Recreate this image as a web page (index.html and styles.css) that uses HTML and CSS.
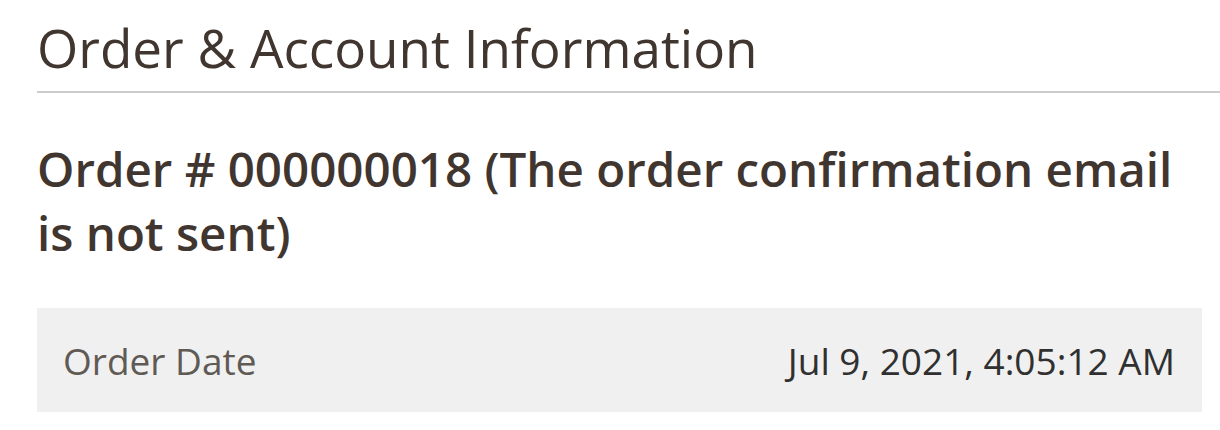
FILE: index.html
```html
<!DOCTYPE html>
<html lang="en">
<head>
<meta charset="utf-8">
<title>Order &amp; Account Information</title>
<link rel="stylesheet" href="styles.css">
</head>
<body>
<section class="admin-section">
  <div class="section-title-wrap">
    <h2 class="section-title">Order &amp; Account Information</h2>
  </div>
  <div class="section-content">
    <h3 class="order-title">Order # 000000018 (The order confirmation email is not sent)</h3>
    <table class="info-table">
      <tr>
        <th>Order Date</th>
        <td>Jul 9, 2021, 4:05:12 AM</td>
      </tr>
    </table>
  </div>
</section>
</body>
</html>
```
FILE: styles.css
```css
html, body {
  margin: 0;
  padding: 0;
  background: #ffffff;
}
body {
  font-family: "Open Sans", "Liberation Sans", sans-serif;
  color: #41362f;
}
.admin-section {
  padding-left: 37px;
}
.section-title-wrap {
  border-bottom: 2px solid #cccccc;
  padding-bottom: 8px;
}
.section-title {
  margin: 0;
  padding-top: 13px;
  font-size: 53px;
  font-weight: 400;
  line-height: 70px;
  color: #41362f;
}
.section-content {
  padding-right: 18px;
}
.order-title {
  margin: 0;
  padding-top: 44px;
  font-size: 47.5px;
  font-weight: 600;
  line-height: 64px;
  color: #41362f;
}
.info-table {
  width: 100%;
  margin-top: 43px;
  border-collapse: collapse;
  background: #f0f0f0;
}
.info-table th,
.info-table td {
  height: 104px;
  padding: 0 27px 0 26px;
  font-size: 37px;
  font-weight: 400;
  vertical-align: middle;
}
.info-table th {
  text-align: left;
  color: #5f5a54;
}
.info-table td {
  text-align: right;
  color: #303030;
}
```
